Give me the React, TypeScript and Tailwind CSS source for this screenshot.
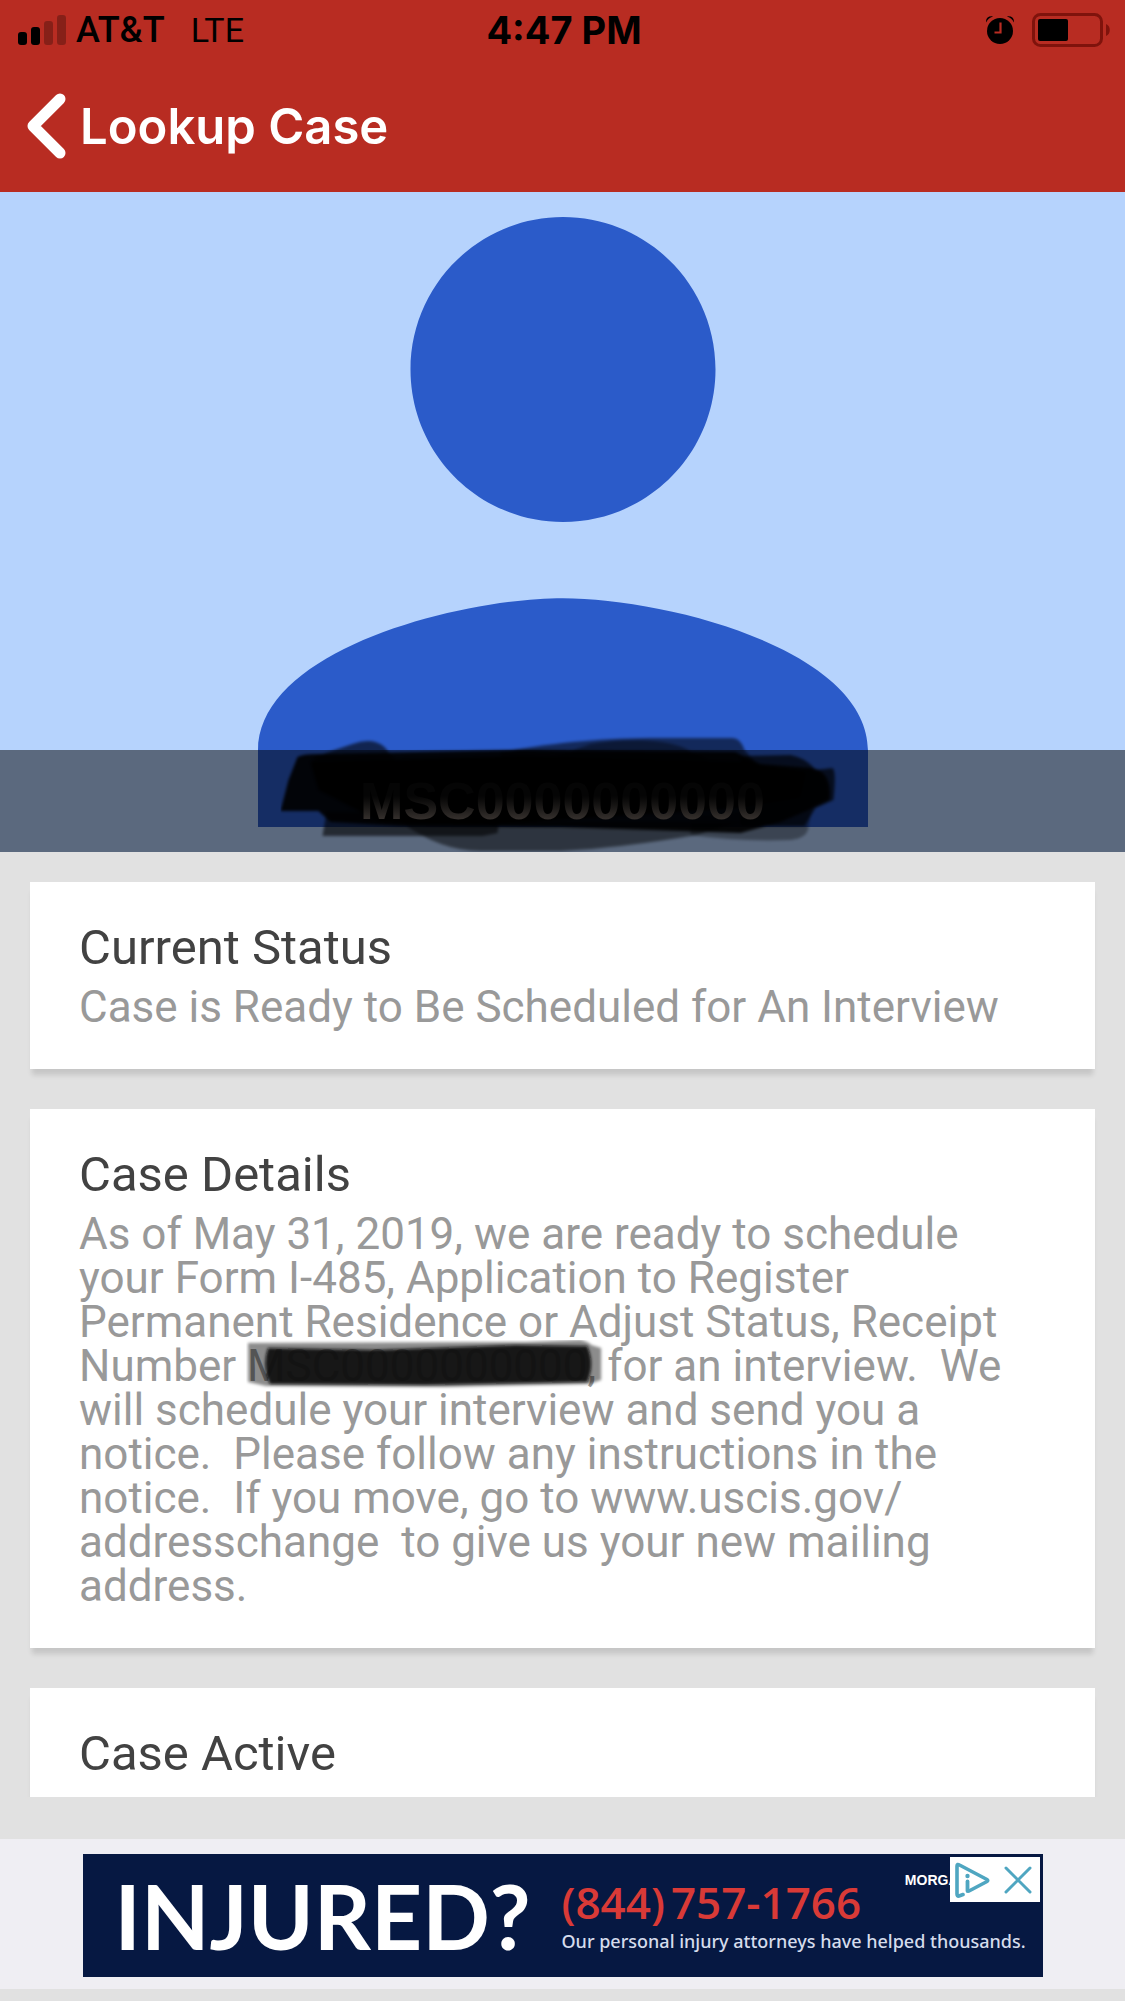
import React from 'react';

interface CardProps {
  title: string;
  children?: React.ReactNode;
}

const MASKED_RECEIPT = 'MSC0000000000';

const SignalIcon = () => (
  <svg className="w-12 h-[30px]" viewBox="0 0 48 30" aria-hidden="true">
    <rect x="0" y="17" width="9" height="13" rx="3" fill="#000" />
    <rect x="13" y="12" width="9" height="18" rx="3" fill="#000" />
    <rect x="26" y="6" width="9" height="24" rx="3" fill="#000" fillOpacity="0.27" />
    <rect x="39" y="0" width="9" height="30" rx="3" fill="#000" fillOpacity="0.27" />
  </svg>
);

const AlarmIcon = () => (
  <svg className="w-7 h-7" viewBox="0 0 28 28" aria-hidden="true">
    <circle cx="14" cy="15" r="13" fill="#000" />
    <path d="M0 6.500C-.3 2 2.500-.3 7 .4 3.500 1.500 1.500 3.500 0 6.500ZM28 6.500C28.300 2 25.500-.3 21 .4 24.500 1.500 26.500 3.500 28 6.500Z" fill="#000" />
    <path d="M14.500 6.500v10H8.500" fill="none" stroke="#b82c22" strokeWidth="2.200" />
  </svg>
);

const BatteryIcon = () => (
  <svg className="w-[78px] h-[34px]" viewBox="0 0 78 34" aria-hidden="true">
    <rect x="1.500" y="1.500" width="68" height="31" rx="7" fill="none" stroke="#7f130c" strokeWidth="3" />
    <rect x="6" y="6" width="30" height="22" rx="2" fill="#000" />
    <path d="M74 11c5 1.500 5 10.500 0 12Z" fill="#7f130c" />
  </svg>
);

const StatusBar = () => (
  <div className="grid grid-cols-3 items-center h-15 pl-[18px] pr-[15px] text-black">
    <div className="flex items-center">
      <SignalIcon />
      <span className="ml-[10px] font-['Roboto',sans-serif] text-[36px] leading-none font-medium">AT&amp;T</span>
      <span className="ml-[26px] font-['Roboto',sans-serif] text-[34px] leading-none">LTE</span>
    </div>
    <span className="text-center font-['Inter',sans-serif] text-[38px] leading-none font-bold">4:47 PM</span>
    <div className="flex items-center justify-end gap-[18px]">
      <AlarmIcon />
      <BatteryIcon />
    </div>
  </div>
);

const NavBar = () => (
  <nav className="flex items-center h-33 px-[26px]">
    <button type="button" className="flex items-center gap-[14px] text-white">
      <svg className="w-10 h-[66px]" viewBox="0 0 40 66" aria-hidden="true">
        <path d="M34 6 7 33l27 27" fill="none" stroke="currentColor" strokeWidth="11" strokeLinecap="round" strokeLinejoin="round" />
      </svg>
      <span className="font-['Inter',sans-serif] text-[49px] leading-none font-semibold">Lookup Case</span>
    </button>
  </nav>
);

const HeroScribble = () => (
  <svg
    className="absolute bottom-0 left-1/2 -translate-x-1/2 w-[565px] h-[122px]"
    viewBox="280 730 565 122"
    aria-hidden="true"
  >
    <defs>
      <filter id="soft" x="-5%" y="-20%" width="110%" height="140%">
        <feGaussianBlur stdDeviation="1.6" />
      </filter>
    </defs>
    <g filter="url(#soft)" fill="#000">
      <path d="M322 836 326 812H500L497 833 482 836Z" fillOpacity="0.6" />
      <path d="M400 822Q440 851 480 851H560Q620 848 696 835L740 822Z" fillOpacity="0.5" />
      <path d="M690 835Q740 842 790 840 808 838 808 826L812 806 690 816Z" fillOpacity="0.35" />
      <path d="M316 756 352 744Q372 737 384 747L398 764H310Z" fillOpacity="0.6" />
      <path d="M500 752C560 742 600 738 660 738H732Q740 738 744 750L760 768H500Z" fillOpacity="0.55" />
      <path d="M590 744C620 739 660 738 684 748L710 762H540Z" fillOpacity="0.4" />
      <path d="M740 756 790 755Q806 758 815 770L832 768Q836 770 833 800L815 808 804 826 740 826Z" fillOpacity="0.7" />
      <path d="M280 811 288 780 297 757Q302 754 316 754L520 750 735 752 760 764 812 768Q832 772 829 800L808 810 780 822 740 833 560 827 400 826 330 822 318 811Z" fillOpacity="0.92" />
      <path d="M310 762 520 756 740 762 806 772 800 798 740 808 500 824 380 822 318 790Z" />
    </g>
  </svg>
);

const Hero = () => (
  <section className="relative flex justify-center bg-[#b6d3fd] py-[25px]">
    <svg className="w-[610px] h-[610px]" viewBox="4 4 16 16" fill="#2b5bc9" role="img" aria-label="Profile">
      <path d="M12 12c2.210 0 4-1.790 4-4s-1.790-4-4-4-4 1.790-4 4 1.790 4 4 4zm0 2c-2.670 0-8 1.340-8 4v2h16v-2c0-2.660-5.330-4-8-4z" />
    </svg>
    <div className="absolute inset-x-0 bottom-0 h-[102px] bg-black/50" />
    <HeroScribble />
    <span className="absolute inset-x-0 bottom-0 flex items-center justify-center h-[102px] font-['Liberation_Sans',sans-serif] text-[52px] leading-none font-bold">
      <span className="bg-linear-to-b from-[#050505] from-40% to-[#35302d] to-85% bg-clip-text text-transparent">{MASKED_RECEIPT}</span>
    </span>
  </section>
);

const InlineReceipt = () => (
  <span className="relative">
    {MASKED_RECEIPT},
    <svg
      className="absolute -left-px top-0 w-[calc(100%+10px)] h-[50px]"
      viewBox="0 0 360 50"
      preserveAspectRatio="none"
      aria-hidden="true"
    >
      <g filter="url(#soft)">
        <path d="M2 3 280 2 335 0Q344 2 346 5L356 8V40L344 44 200 47 20 46 2 42Z" fill="#000" fillOpacity="0.45" />
        <path d="M22 8 130 10 270 5 342 6Q350 24 342 42L180 45 24 44Q16 26 22 8Z" fill="#0c0c0c" fillOpacity="0.93" />
      </g>
    </svg>
  </span>
);

const Card: React.FC<CardProps> = ({ title, children }) => (
  <section className="shrink-0 bg-white px-[49px] pt-9 pb-10 shadow-[0_8px_5px_-2px_rgba(0,0,0,0.12)]">
    <h2 className="text-[49px] leading-[60px] text-[#424242]">{title}</h2>
    <div className="mt-[7px] text-[44px] leading-[44px] text-[#999999] whitespace-pre">{children}</div>
  </section>
);

const AdBanner = () => (
  <aside className="flex justify-center bg-[#efeef3] pt-[15px] pb-3">
    <div className="relative flex items-center w-[960px] h-[123px] pl-8 bg-[#061842] overflow-hidden">
      <span className="w-[447px] font-['Lato',sans-serif] text-[89px] leading-none font-bold text-white">INJURED?</span>
      <div className="flex flex-col">
        <a href="tel:8447571766" className="flex gap-[6px] font-['Open_Sans',sans-serif] text-[44px] leading-[50px] font-semibold text-[#d93a37]">
          <span>(844)</span>
          <span>757-1766</span>
        </a>
        <span className="font-['Noto_Sans',sans-serif] text-lg font-medium text-[#d5dcec]">
          Our personal injury attorneys have helped thousands.
        </span>
      </div>
      <span className="absolute top-4 right-[84px] font-['Liberation_Sans_Narrow','Liberation_Sans',sans-serif] text-sm leading-5 font-bold text-white">
        MORGA
      </span>
      <div className="absolute top-[3px] right-[3px] flex items-center justify-between w-[90px] h-[45px] pl-1 pr-2 bg-white text-[#4fa6c1]">
        <button type="button" aria-label="Ad choices">
          <svg className="w-9 h-9" viewBox="0 0 36 36" fill="none" stroke="currentColor" strokeLinecap="round" strokeLinejoin="round">
            <path d="M9 32.500 5 34Q3 34.500 3 32V4Q3 1.500 5.500 3L33 17.500Q34.500 18.500 33 19.500L15 29" strokeWidth="3.600" />
            <circle cx="13.500" cy="14" r="2.200" fill="currentColor" stroke="none" />
            <path d="M13.500 19.500V29" strokeWidth="3.800" />
          </svg>
        </button>
        <button type="button" aria-label="Close ad">
          <svg className="w-7 h-7" viewBox="0 0 28 28" fill="none" stroke="currentColor" strokeWidth="3" strokeLinecap="round">
            <path d="M2 2 26 26M26 2 2 26" />
          </svg>
        </button>
      </div>
    </div>
  </aside>
);

export default function App() {
  return (
    <div className="flex flex-col h-screen bg-[#e1e1e1] font-['Roboto',sans-serif]">
      <header className="bg-[#b82c22]">
        <StatusBar />
        <NavBar />
      </header>

      <main className="flex flex-col flex-1 min-h-0 overflow-hidden">
        <Hero />
        <div className="flex flex-col gap-10 px-[30px] pt-[30px]">
          <Card title="Current Status">Case is Ready to Be Scheduled for An Interview</Card>
          <Card title="Case Details">
            <p>As of May 31, 2019, we are ready to schedule</p>
            <p>your Form I-485, Application to Register</p>
            <p>Permanent Residence or Adjust Status, Receipt</p>
            <p>Number <InlineReceipt /> for an interview.  We</p>
            <p>will schedule your interview and send you a</p>
            <p>notice.  Please follow any instructions in the</p>
            <p>notice.  If you move, go to www.uscis.gov/</p>
            <p>addresschange  to give us your new mailing</p>
            <p>address.</p>
          </Card>
          <Card title="Case Active" />
        </div>
      </main>

      {/* Ad slot pinned under the scroll area */}
      <footer className="pt-[42px] pb-3">
        <AdBanner />
      </footer>
    </div>
  );
}
